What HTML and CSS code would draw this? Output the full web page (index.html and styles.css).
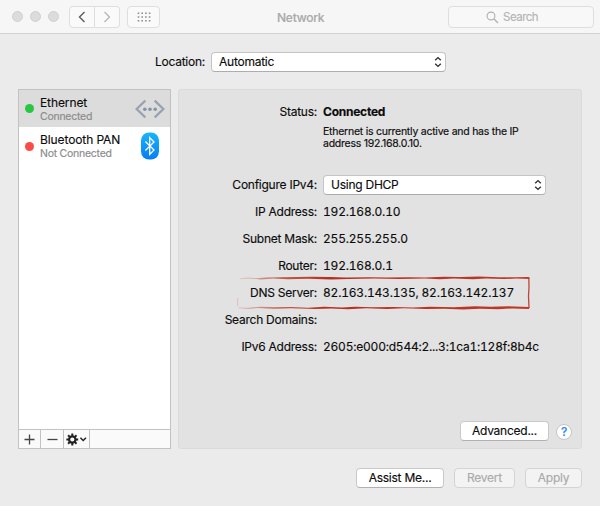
FILE: index.html
```html
<!DOCTYPE html>
<html lang="en">
<head>
<meta charset="utf-8">
<title>Network</title>
<link rel="stylesheet" href="styles.css">
</head>
<body>
<header class="toolbar">
  <div class="lights"><i></i><i></i><i></i></div>
  <div class="nav">
    <button aria-label="Back"><svg width="8" height="12" viewBox="0 0 8 12"><path d="M6.5 1 1.5 6l5 5" fill="none" stroke="#5c5c5c" stroke-width="1.4"/></svg></button>
    <button aria-label="Forward"><svg width="8" height="12" viewBox="0 0 8 12"><path d="M1.5 1l5 5-5 5" fill="none" stroke="#b5b5b5" stroke-width="1.3"/></svg></button>
  </div>
  <button class="grid" aria-label="Show all"><svg width="14" height="10" viewBox="0 0 14 10"><path d="M.7 1.2H14M.7 5H14M.7 8.8H14" stroke="#8d8d8d" stroke-width="1.6" stroke-dasharray="1.6 2.1"/></svg></button>
  <h1>Network</h1>
  <div class="search"><svg width="13" height="13" viewBox="0 0 13 13"><circle cx="5" cy="5" r="3.9" fill="none" stroke="#b0b0b0" stroke-width="1.1"/><path d="M7.8 7.8 12 12" stroke="#b0b0b0" stroke-width="1.3"/></svg><span>Search</span></div>
</header>
<main>
  <div class="location">
    <span class="location-label">Location:</span>
    <div class="select location-select"><span>Automatic</span><svg width="8" height="12" viewBox="0 0 8 12"><path d="M1.2 4.3 4 1.6l2.8 2.7M1.2 7.7 4 10.4l2.8-2.7" fill="none" stroke="#303030" stroke-width="1.4"/></svg></div>
  </div>
  <div class="columns">
    <aside class="sidebar">
      <div class="service selected">
        <i class="dot green"></i>
        <div class="service-text"><b>Ethernet</b><small>Connected</small></div>
        <svg class="service-icon" width="30" height="22" viewBox="0 0 30 22"><path d="M10.3 2.6 1.6 11l8.7 8.4M19.7 2.6l8.7 8.4-8.7 8.4" fill="none" stroke="#98a2b1" stroke-width="2.3"/><g fill="#8593a8"><circle cx="9.8" cy="11.2" r="1.8"/><circle cx="15" cy="11.2" r="1.8"/><circle cx="20.2" cy="11.2" r="1.8"/></g></svg>
      </div>
      <div class="service">
        <i class="dot red"></i>
        <div class="service-text"><b>Bluetooth PAN</b><small>Not Connected</small></div>
        <svg class="service-icon" width="30" height="28" viewBox="0 0 30 28"><defs><linearGradient id="bt" x1="0" y1="0" x2="0" y2="1"><stop offset="0" stop-color="#19b5fb"/><stop offset="1" stop-color="#087df4"/></linearGradient></defs><rect x="6" y=".5" width="18" height="27" rx="8" fill="url(#bt)"/><path d="M10.4 9.5 19 18l-4.3 4.5V5.5L19 10l-8.6 8.5" fill="none" stroke="#fff" stroke-width="1.3"/></svg>
      </div>
      <div class="actions">
        <button aria-label="Add"><svg width="11" height="11" viewBox="0 0 11 11"><path d="M5.5.5v10M.5 5.5h10" stroke="#454545" stroke-width="1.3"/></svg></button>
        <button aria-label="Remove"><svg width="11" height="11" viewBox="0 0 11 11"><path d="M.5 5.5h10" stroke="#454545" stroke-width="1.3"/></svg></button>
        <button class="gear" aria-label="Actions"><svg width="21" height="13" viewBox="0 0 21 13"><circle cx="6.3" cy="6.5" r="3.2" fill="none" stroke="#222" stroke-width="2.2"/><path d="M6.3.6v2.5M6.3 9.9v2.5M.4 6.5h2.5M9.7 6.5h2.5M2.1 2.3l1.8 1.8M8.7 8.9l1.8 1.8M10.5 2.3 8.7 4.1M3.9 8.9l-1.8 1.8" stroke="#222" stroke-width="2"/><path d="m14.4 4.7 2.8 2.8L20 4.7" fill="none" stroke="#222" stroke-width="1.5"/></svg></button>
      </div>
    </aside>
    <section class="panel">
      <div class="row status"><span class="label">Status:</span><strong>Connected</strong></div>
      <p class="note">Ethernet is currently active and has the IP<br>address 192.168.0.10.</p>
      <div class="row"><span class="label">Configure IPv4:</span><div class="select"><span>Using DHCP</span><svg width="8" height="12" viewBox="0 0 8 12"><path d="M1.2 4.3 4 1.6l2.8 2.7M1.2 7.7 4 10.4l2.8-2.7" fill="none" stroke="#303030" stroke-width="1.4"/></svg></div></div>
      <div class="row"><span class="label">IP Address:</span><span class="value">192.168.0.10</span></div>
      <div class="row"><span class="label">Subnet Mask:</span><span class="value">255.255.255.0</span></div>
      <div class="row"><span class="label">Router:</span><span class="value">192.168.0.1</span></div>
      <div class="row"><span class="label">DNS Server:</span><span class="value">82.163.143.135, 82.163.142.137</span>
        <svg class="marker" width="296" height="34" viewBox="0 0 296 34">
          <defs><linearGradient id="ink"><stop offset="0" stop-color="#bd3b2b" stop-opacity=".15"/><stop offset=".14" stop-color="#bd3b2b" stop-opacity=".8"/><stop offset=".3" stop-color="#b92e1e"/><stop offset="1" stop-color="#bd3928"/></linearGradient></defs>
          <g fill="url(#ink)">
            <path d="M4 2.3 12 1.6 20 2.3 30 1.4 43 1.2 60 1 76 .8 94 1.1 110 1.6 133 1.2 151 1.6 173 1.3 189 1.6 208 .8 224 1.1 243 .6 263 1.3 278 1.2 293 1 293.6 3 280 2.6 268 3.1 250 2.5 237 3.2 218 2.4 204 3.3 189 2.5 163 2.9 138 2.4 112 3 95 3.4 72 2.7 52 3.2 37 2.4 25 3.4 13 2.4 4 3.3Z"/>
            <path d="M2 31.3 12 31.7 24 30.8 38 31.3 55 31.1 72 31.7 88 30.8 106 31.6 119 30.7 136 31.3 158 31 177 31.4 194 30.7 218 31.2 239 30.3 255 30.7 272 30.2 293.3 30.9 293 33 276 32.5 262 33.3 244 32.7 227 33.4 208 32.7 190 33.1 168 32.3 151 32.9 130 32.2 112 33.2 95 32.4 79 33 55 32.3 38 32.8 21 32.1 12 32.9 2 32.2Z"/>
          </g>
          <path d="M292.8 1.2 293 11 292.5 20 293 32" fill="none" stroke="#c04435" stroke-width="1.3"/>
          <path d="M1.6 22v8" stroke="#bd3b2b" stroke-opacity=".25" stroke-width=".8"/>
        </svg>
      </div>
      <div class="row"><span class="label">Search Domains:</span></div>
      <div class="row"><span class="label">IPv6 Address:</span><span class="value v-six">2605:e000:d544:2...3:1ca1:128f:8b4c</span></div>
      <div class="panel-actions"><button class="btn advanced">Advanced...</button><button class="help" aria-label="Help">?</button></div>
    </section>
  </div>
  <footer><button class="btn assist">Assist Me...</button><button class="btn revert" disabled>Revert</button><button class="btn apply" disabled>Apply</button></footer>
</main>
</body>
</html>
```
FILE: styles.css
```css
* { box-sizing: border-box; }
body { margin: 0; width: 600px; height: 506px; overflow: hidden; background: #ebebeb; color: #0c0c0c; font: 12px/16px Inter, sans-serif; letter-spacing: -.25px; -webkit-text-stroke: .15px; }
button { font: inherit; letter-spacing: inherit; color: inherit; margin: 0; padding: 0; display: flex; align-items: center; justify-content: center; }
svg { display: block; flex: none; }
span, strong, b, small { white-space: nowrap; }

.toolbar { height: 34px; display: flex; align-items: flex-start; padding: 6px 6px 0 12px; background: #f6f6f6; border-bottom: 1px solid #d2d2d2; }
.lights { display: flex; gap: 7px; padding-top: 5px; }
.lights i { width: 11px; height: 11px; border-radius: 50%; background: #dcdcdc; border: 1px solid #d0d0d0; }
.nav { display: flex; margin-left: 10px; }
.nav button, .grid { height: 22px; background: #fafafa; border: 1px solid #dedede; border-radius: 4px; }
.nav button { width: 26px; }
.nav button:first-child { border-radius: 4px 0 0 4px; }
.nav button:last-child { width: 25px; border-radius: 0 4px 4px 0; border-left: 0; }
.grid { width: 33px; margin-left: 7px; }
h1 { margin: 4px 0 0 117px; width: 47px; font-size: 12px; line-height: 16px; font-weight: 500; color: #aaa; white-space: nowrap; }
.search { margin-left: auto; width: 146px; height: 22px; display: flex; align-items: center; gap: 4px; padding-left: 37px; color: #b4b4b4; background: #f8f8f8; border: 1px solid #dedede; border-radius: 4px; font-size: 11.5px; letter-spacing: -.5px; }

.location { height: 20px; margin-top: 18px; display: flex; align-items: center; }
.location-label { width: 205px; margin-right: 6px; text-align: right; }
.select { width: 223px; height: 20px; display: flex; align-items: center; justify-content: space-between; padding: 0 3px 0 7px; background: #fff; border: 1px solid #c4c4c4; border-bottom-color: #adadad; border-radius: 4px; }
.location-select { width: 235px; }

.columns { display: flex; gap: 7px; padding-left: 18px; margin-top: 17px; }
.sidebar { width: 153px; height: 360px; display: flex; flex-direction: column; background: #fff; border: 1px solid #c2c2c2; }
.service { height: 38px; display: flex; align-items: center; padding: 0 5px 0 6px; }
.selected { height: 37px; background: #dcdcdc; }
.dot { width: 9px; height: 9px; border-radius: 50%; flex: none; }
.green { background: #27c840; }
.red { background: #fb4b47; }
.service-text { margin-left: 6px; width: 95px; flex: none; }
.service-text b { display: block; font-weight: 400; line-height: 14px; letter-spacing: -.1px; }
.service-text small { display: block; padding-top: 1px; margin-bottom: -1px; font-size: 10.5px; line-height: 12px; color: #8b8b8b; }
.actions { margin-top: auto; height: 19px; display: flex; background: #fafafa; border-top: 1px solid #c2c2c2; }
.actions button { width: 22px; background: none; border: 0; border-right: 1px solid #c2c2c2; }
.actions button + button { width: 23px; }
.actions .gear { width: 26px; }

.panel { width: 404px; height: 360px; padding-top: 8px; background: #e2e2e2; border: 1px solid #dadada; border-radius: 3px; }
.row { height: 27px; display: flex; align-items: center; position: relative; }
.label { width: 138px; margin-right: 6px; text-align: right; }
.value { font-variant-numeric: tabular-nums; letter-spacing: -.2px; }
.v-six { letter-spacing: -.22px; }
.note { margin: 0 0 19px 144px; padding-top: 1px; height: 27px; font-size: 10.5px; line-height: 12px; white-space: nowrap; }
.marker { position: absolute; left: 57px; top: -3px; }
.panel-actions { margin-top: 61px; padding-left: 281px; display: flex; align-items: center; gap: 7px; }
.btn { height: 20px; background: #fff; border: 1px solid #c9c9c9; border-bottom-color: #b1b1b1; border-radius: 4px; white-space: nowrap; }
.advanced { width: 89px; }
.help { width: 16px; height: 16px; margin-top: 1px; border: 1px solid #c6c6c6; border-radius: 50%; background: #fff; color: #2c86f7; font-weight: 500; font-size: 12px; }
footer { margin: 19px 18px 0; display: flex; justify-content: flex-end; gap: 10px; }
.assist { width: 88px; }
.revert { width: 61px; }
.apply { width: 57px; }
.btn:disabled { background: #f3f3f3; border-color: #d3d3d3; color: #aaa; }
```
